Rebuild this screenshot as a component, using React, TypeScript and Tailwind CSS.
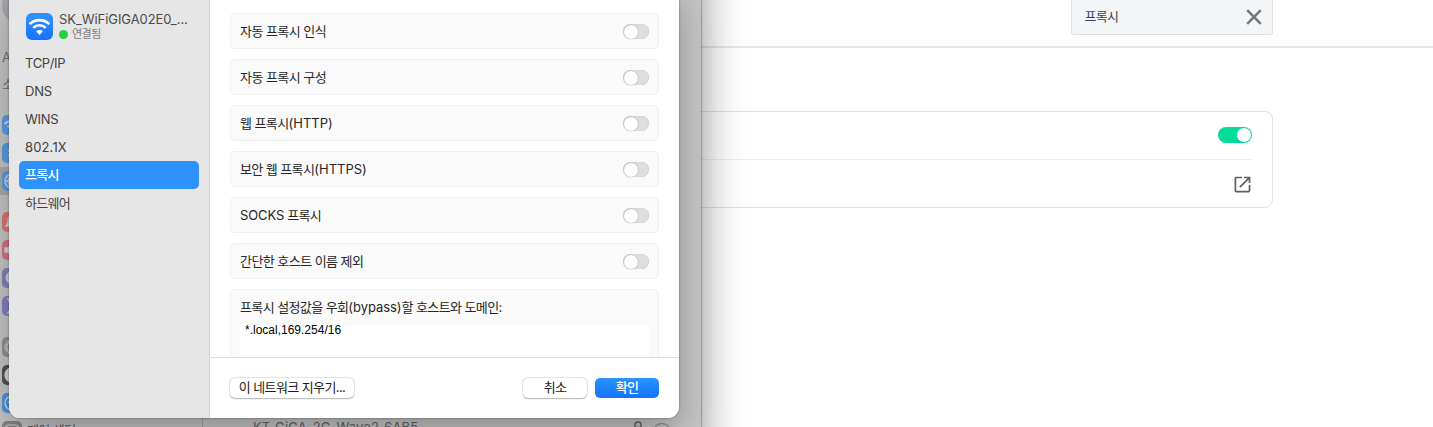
import type { ReactNode } from "react";

const FONT = "font-['Inter','Noto_Sans_CJK_KR',sans-serif]";

function WifiGlyph({ className }: { className: string }) {
  return (
    <svg viewBox="0 0 20 20" className={className} fill="none" stroke="currentColor" strokeWidth="2.5">
      <path d="M0.7 7.8 C5.6 2.6 14.4 2.6 19.3 7.8" />
      <path d="M4.1 11.3 C7.4 7.9 12.6 7.9 15.9 11.3" />
      <path d="M10 18 L6.9 14.7 C8.6 13 11.4 13 13.1 14.7 Z" fill="currentColor" stroke="none" />
    </svg>
  );
}

function BrowserPage() {
  return (
    <div className="h-full w-full bg-white">
      <header className="flex h-[48px] items-start justify-end border-b-2 border-[#e6e7e8] pr-[160px]">
        <div className="flex h-[35px] w-[202px] items-center justify-between rounded-b-[2px] border border-t-0 border-[#dfe1e4] bg-[#f4f5f7] pr-[10px] pl-[12.5px]">
          <span className="-mt-[2px] text-[13px] leading-[18px] tracking-[-0.7px] text-[#3c4160]">프록시</span>
          <svg viewBox="0 0 16 16" className="-mt-[1px] h-[16px] w-[16px]" fill="none" stroke="#75787c" strokeWidth="2.6">
            <path d="M1.2 1.2 L14.8 14.8 M14.8 1.2 L1.2 14.8" />
          </svg>
        </div>
      </header>
      <main className="px-[160px] pt-[63px]">
        <section className="h-[97px] rounded-[8px] border border-[#dfe3ea] px-[20px]">
          <div className="flex h-[48px] items-center justify-end border-b border-[#eeeff1] pb-[1px]">
            <div className="flex h-[16px] w-[34px] items-center justify-end rounded-full bg-[#03dc99] pr-[1px]">
              <div className="h-[14px] w-[14px] rounded-full bg-white" />
            </div>
          </div>
          <div className="flex h-[48px] items-center justify-end pr-[1px]">
            <svg viewBox="0 0 17 17" className="h-[17px] w-[17px]" fill="none" stroke="#5d6166" strokeWidth="1.7">
              <path d="M8 1.5 H2.3 Q1.4 1.5 1.4 2.4 V14.7 Q1.4 15.6 2.3 15.6 H14.6 Q15.5 15.6 15.5 14.7 V9" />
              <path d="M10 1.5 H15.5 V7 M15.2 1.8 L5.8 11.2" />
            </svg>
          </div>
        </section>
      </main>
    </div>
  );
}

function Tile({ className, children }: { className: string; children: ReactNode }) {
  return (
    <div className={`flex h-[20px] w-[20px] shrink-0 items-center justify-center rounded-[5px] text-[#d8d8d8] ${className}`}>
      <svg viewBox="0 0 20 20" className="h-[20px] w-[20px]" fill="none" stroke="currentColor" strokeWidth="1.4">
        {children}
      </svg>
    </div>
  );
}

function SettingsWindow() {
  return (
    <div className="flex h-full w-full">
      <aside className="flex h-full w-[203px] shrink-0 flex-col overflow-hidden border-r border-[#a9a9a9] pl-[2px]">
        <div className="-mt-[15px] h-[40px] w-[40px] shrink-0 rounded-full bg-[#aaaab2]" />
        <div className="mt-[22px] h-[20px] text-[13px] leading-[20px] text-[#707070]">A</div>
        <div className="mt-[7px] h-[20px] text-[13px] leading-[20px] text-[#707070]">소</div>
        <div className="mt-[21px] flex flex-col gap-[8px]">
          <Tile className="bg-[#5a9ee6]">
            <path d="M2.5 9 C7 4.5 13 4.5 17.5 9 M5.5 12 C8 9.5 12 9.5 14.5 12" strokeWidth="2" />
          </Tile>
          <Tile className="bg-[#5a9ee6]"><path d="M6 7 L13 13 L10 16 V4 L13 7 L6 13" /></Tile>
          <div className="-my-[4px] -ml-[2px] bg-[#adadad] py-[4px] pl-[2px]">
            <Tile className="bg-[#5a9ee6]"><circle cx="10" cy="10" r="7" /><path d="M3 10 H17 M10 3 C5 7 5 13 10 17 C15 13 15 7 10 3" /></Tile>
          </div>
        </div>
        <div className="mt-[21px] flex flex-col gap-[8px]">
          <Tile className="bg-[#dc7872]"><path d="M4 14 H16 L14 11 V8 Q14 4 10 4 Q6 4 6 8 V11 Z" fill="currentColor" /></Tile>
          <Tile className="bg-[#dc7088]"><path d="M3 8 H6 L11 4 V16 L6 12 H3 Z" fill="currentColor" /></Tile>
          <Tile className="bg-[#8482c2]"><path d="M9 4 A6 6 0 1 0 16 12 A5 5 0 0 1 9 4 Z" fill="currentColor" /></Tile>
          <Tile className="bg-[#8482c2]"><path d="M6 3 H14 L10 10 L14 17 H6 L10 10 Z" fill="currentColor" /></Tile>
        </div>
        <div className="mt-[21px] flex flex-col gap-[8px]">
          <Tile className="bg-[#939393]"><circle cx="10" cy="10" r="6.6" strokeWidth="2" strokeDasharray="1.2 1" /><circle cx="10" cy="10" r="5.2" strokeWidth="1" /></Tile>
          <Tile className="bg-[#525252]"><circle cx="10" cy="10" r="7" fill="currentColor" /></Tile>
          <Tile className="bg-[#4d97df]"><circle cx="10" cy="10" r="7" /><circle cx="10" cy="6.5" r="1.2" /><path d="M6 9 H14 M10 9 V15" /></Tile>
          <div className="flex items-center gap-[5px] text-[13px] leading-[20px] text-[#5b5b5b]">
            <Tile className="bg-[#858585]"><rect x="3.5" y="4" width="13" height="12" rx="3" strokeWidth="1" /><path d="M4 8 H16" strokeWidth="1" /></Tile>
            <span className="-mt-[2px] tracking-[-0.6px]">제어 센터</span>
          </div>
        </div>
      </aside>
      <section className="flex flex-1 flex-col justify-end overflow-hidden">
        <div className="-mb-[13px] flex h-[25px] items-center justify-between pr-[31px] pl-[50px] text-[13px] text-[#636363]">
          <span className="tracking-[0.1px]">KT_GiGA_2G_Wave2_6AB5</span>
          <span className="flex items-center gap-[10px]">
            <svg viewBox="0 0 12 14" className="h-[14px] w-[12px]" fill="none" stroke="currentColor" strokeWidth="1.4">
              <path d="M3 7 V4 Q3 1 6 1 Q9 1 9 4 V7" /><rect x="2" y="6.5" width="8" height="7" rx="1" fill="currentColor" />
            </svg>
            <svg viewBox="0 0 16 14" className="mt-[3px] h-[14px] w-[16px]" fill="none" stroke="currentColor" strokeWidth="1.5">
              <path d="M1 4.5 Q8 -1.5 15 4.5" opacity=".5" /><path d="M4 7.5 Q8 4 12 7.5 L8 11 Z" fill="currentColor" />
            </svg>
          </span>
        </div>
      </section>
    </div>
  );
}

const tabs = [
  { label: "TCP/IP", cls: "pt-[2px] tracking-[-0.35px]" },
  { label: "DNS", cls: "pt-[2px] tracking-[-0.25px]" },
  { label: "WINS", cls: "pt-[2px] tracking-[-0.25px]" },
  { label: "802.1X", cls: "pt-[2px] tracking-[0.15px]" },
  { label: "프록시", cls: "tracking-[-0.75px]", active: true },
  { label: "하드웨어", cls: "pt-[1px] tracking-[-0.7px]" },
];

const options: { label: ReactNode; cls: string }[] = [
  { label: "자동 프록시 인식", cls: "tracking-[-0.55px]" },
  { label: "자동 프록시 구성", cls: "tracking-[-0.55px]" },
  { label: <>웹 프록시<span className="tracking-[0px]">(HTTP)</span></>, cls: "tracking-[-0.6px]" },
  { label: <>보안 웹 프록시<span className="tracking-[0px]">(HTTPS)</span></>, cls: "tracking-[-0.6px]" },
  { label: <><span className="tracking-[-0.1px]">SOCKS</span> 프록시</>, cls: "tracking-[-0.65px]" },
  { label: "간단한 호스트 이름 제외", cls: "tracking-[-0.55px]" },
];

function ProxyDialog() {
  return (
    <div className="flex h-full w-full overflow-hidden rounded-[11px] bg-white">
      <nav className="flex w-[201px] shrink-0 flex-col border-r border-[#d2d2d2] bg-[#e6e6e6] px-[10px] pt-[33px]">
        <div className="flex h-[26px] items-center gap-[6px] pl-[7px]">
          <div className="flex h-[27px] w-[27px] shrink-0 items-center justify-center rounded-[6px] bg-gradient-to-b from-[#3392ff] to-[#1674fb] text-white">
            <WifiGlyph className="h-[21px] w-[21px]" />
          </div>
          <div className="w-[140px] whitespace-nowrap pt-[1px] text-[#4a4a4a]">
            <div className="text-[13px] leading-[15px] tracking-[-0.07px]">SK_WiFiGIGA02E0_...</div>
            <div className="flex items-center gap-[4px] text-[11px] leading-[14px] text-[#7d7d7d]">
              <span className="h-[9px] w-[9px] rounded-full bg-[#28cd41]" />
              <span className="tracking-[-0.5px]">연결됨</span>
            </div>
          </div>
        </div>
        <ul className="mt-[10px]">
          {tabs.map((t) => (
            <li
              key={t.label}
              className={`flex h-[28px] items-center rounded-[5px] pl-[6px] text-[13px] ${t.cls} ${
                t.active ? "bg-[#2f91fb] font-medium text-white" : "text-[#404040]"
              }`}
            >
              {t.label}
            </li>
          ))}
        </ul>
      </nav>
      <div className="flex min-w-0 flex-1 flex-col">
        <div className="flex min-h-0 flex-1 flex-col gap-[10px] overflow-hidden px-[20px] pt-[33px]">
          {options.map((o, i) => (
            <div
              key={i}
              className={`flex h-[36px] shrink-0 items-center justify-between rounded-[5px] border border-[#f0f0f0] bg-[#fafafa] px-[9px] text-[13px] text-[#262626] ${o.cls}`}
            >
              <span className="pt-[2px]">{o.label}</span>
              <span className="mt-[1px] flex h-[15px] w-[26px] items-center rounded-full bg-[#dedede] shadow-[inset_0_0_1px_#aaa]">
                <span className="ml-[0.5px] h-[14px] w-[14px] rounded-full bg-white shadow-[0_0_1.5px_rgba(0,0,0,.35)]" />
              </span>
            </div>
          ))}
          <div className="h-[110px] shrink-0 rounded-[5px] border border-[#f0f0f0] bg-[#fafafa] px-[9px] pt-[8px]">
            <div className="text-[13px] leading-[18px] tracking-[-0.6px] text-[#262626]">
              프록시 설정값을 우회<span className="tracking-[-0.05px]">(bypass)</span>할 호스트와 도메인:
            </div>
            <div className="mt-[9px] h-[80px] bg-white pl-[5px] font-['Liberation_Sans',sans-serif] text-[12px] leading-[10px] text-black">
              *.local,169.254/16
            </div>
          </div>
        </div>
        <footer className="flex h-[61px] shrink-0 items-center border-t border-[#dedede] px-[20px] text-[13px] leading-[18px] tracking-[-0.6px] text-[#1c1c1c]">
          <button className="h-[20px] w-[124px] rounded-[5px] bg-white pb-[2px] leading-[18px] shadow-[0_0_0_0.5px_rgba(0,0,0,.12),0_0.5px_1.5px_rgba(0,0,0,.25)]">이 네트워크 지우기...</button>
          <button className="ml-auto h-[20px] w-[64px] rounded-[5px] bg-white pb-[2px] leading-[18px] shadow-[0_0_0_0.5px_rgba(0,0,0,.12),0_0.5px_1.5px_rgba(0,0,0,.25)]">취소</button>
          <button className="ml-[8px] h-[20px] w-[64px] rounded-[5px] bg-gradient-to-b from-[#2a92ff] to-[#1474fb] pb-[2px] leading-[18px] font-medium text-white">확인</button>
        </footer>
      </div>
    </div>
  );
}

export default function App() {
  return (
    <div className={`relative h-[427px] w-[1433px] overflow-hidden bg-white ${FONT}`}>
      <BrowserPage />
      <div className="absolute -top-[100px] left-0 h-[700px] w-[701px] bg-[#c8c8c8] pt-[100px] shadow-[0_14px_44px_rgba(0,0,0,.4),0_0_1px_1px_rgba(0,0,0,.2)]">
        <div className="h-[427px]"><SettingsWindow /></div>
      </div>
      <div className="absolute -top-[20px] left-[9px] h-[437.5px] w-[670px] rounded-[11px] shadow-[0_16px_40px_rgba(0,0,0,.3),0_0_2px_rgba(0,0,0,.5)]">
        <ProxyDialog />
      </div>
    </div>
  );
}
